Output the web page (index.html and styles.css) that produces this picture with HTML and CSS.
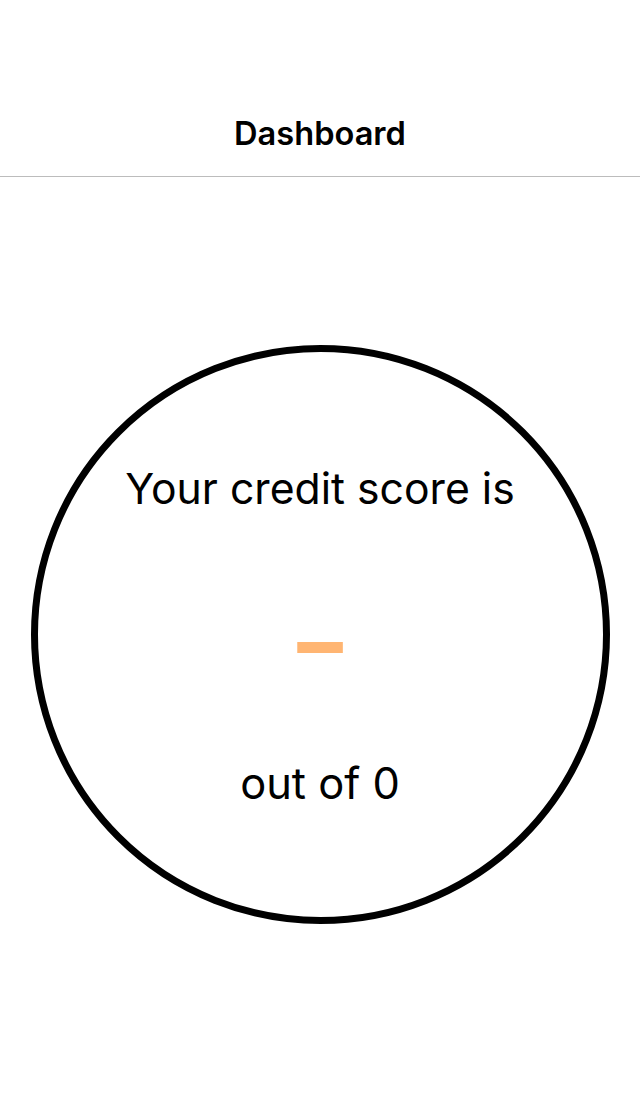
FILE: index.html
```html
<!DOCTYPE html>
<html>
<head>
<meta charset="utf-8">
<link rel="stylesheet" href="styles.css">
</head>
<body>
<header class="navbar">
  <h1 class="title">Dashboard</h1>
</header>
<main class="content">
  <div class="score-ring">
    <div class="score-label">Your credit score is</div>
    <div class="score-value">–</div>
    <div class="score-max">out of 0</div>
  </div>
</main>
</body>
</html>
```

FILE: styles.css
```css
html, body {
  margin: 0;
  padding: 0;
  background: #ffffff;
}
body {
  font-family: Inter, "Liberation Sans", sans-serif;
  color: #000000;
  width: 640px;
}
.navbar {
  height: 177px;
  border-bottom: 1px solid #bcbcbc;
  display: flex;
  align-items: flex-end;
  justify-content: center;
  box-sizing: border-box;
  padding-bottom: 23px;
}
.title {
  margin: 0;
  font-size: 32.6px;
  font-weight: 600;
  line-height: 40px;
}
.content {
  display: flex;
  justify-content: center;
  padding-top: 168px;
}
.score-ring {
  width: 579px;
  height: 579px;
  box-sizing: border-box;
  border: 7.5px solid #000000;
  border-radius: 50%;
  display: flex;
  flex-direction: column;
  align-items: center;
}
.score-label {
  margin-top: 112px;
  font-size: 42.7px;
  line-height: 50px;
}
.score-value {
  margin-top: 75px;
  font-family: "Liberation Sans", sans-serif;
  font-weight: 700;
  font-size: 92px;
  line-height: 100px;
  color: #ffb572;
  transform: scaleY(1.2);
}
.score-max {
  margin-top: 69px;
  font-size: 43.4px;
  line-height: 50px;
}
```
